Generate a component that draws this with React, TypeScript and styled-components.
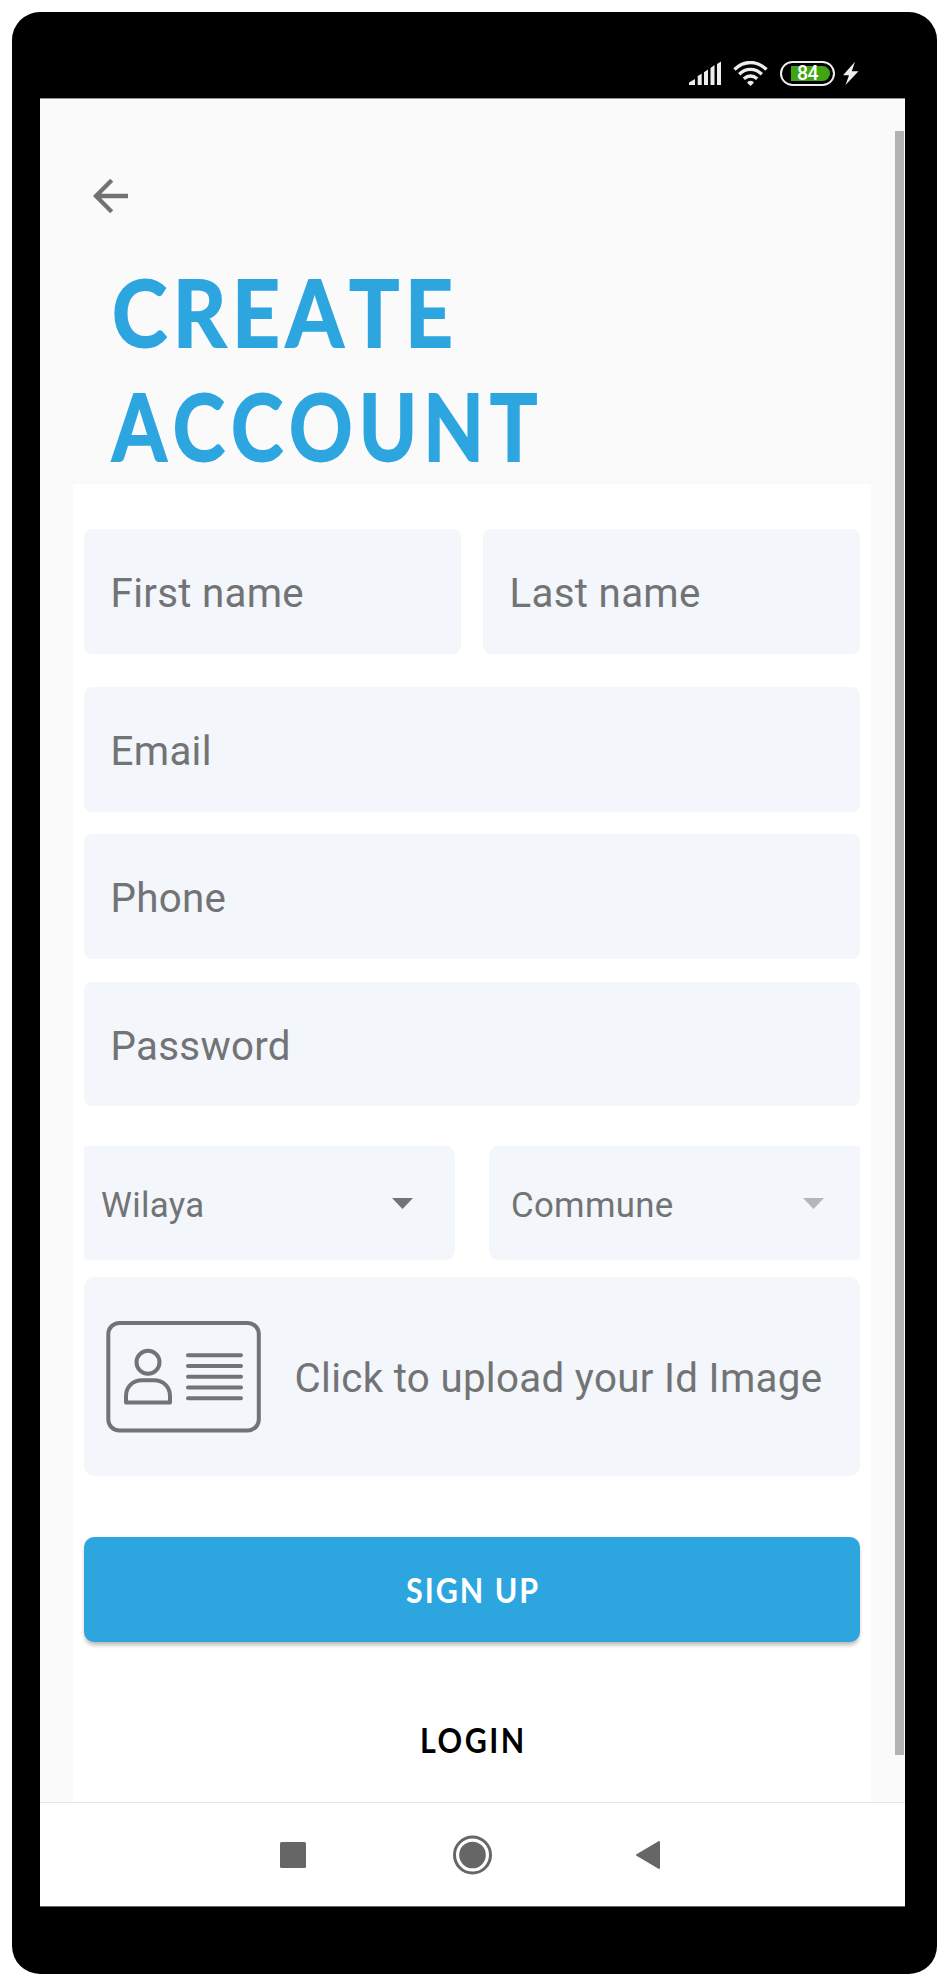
import React from "react";
import styled, { createGlobalStyle } from "styled-components";

const ink = "#727375";
const brand = "#2da6e0";
const fieldFill = "#f3f6fb";

const GlobalStyle = createGlobalStyle`
  * { box-sizing: border-box; }
  body { margin: 0; background: #fff; font-family: Roboto, sans-serif; }
  svg { display: block; flex: none; }
`;

const Phone = styled.div`
  width: 925px;
  height: 1962px;
  margin: 12px 0 0 12px;
  padding: 0 32px 67px 28px;
  background: #000;
  border-radius: 28px;
  display: flex;
  flex-direction: column;
`;

const StatusBar = styled.div`
  height: 86px;
  flex: none;
  display: flex;
  align-items: flex-start;
  padding: 49px 46px 0 649px;
`;

const SignalIcon = styled.svg`
  margin-right: 12px;
`;

const WifiIcon = styled.svg`
  margin-right: 12px;
`;

const Battery = styled.div`
  width: 55px;
  height: 25px;
  border: 2px solid #efefef;
  border-radius: 13px;
  padding: 3px 3px 3px 9px;
  margin-right: 8px;
`;

const Charge = styled.div`
  height: 15px;
  border-radius: 0 8px 8px 0;
  background: #3fa512;
  color: #fff;
  font: 500 19.5px/16px Roboto, sans-serif;
  letter-spacing: -0.5px;
  padding-left: 6px;
`;

const Screen = styled.main`
  flex: 1;
  min-height: 0;
  background: #fafafa;
  border-top: 1px solid #949494;
  border-bottom: 1px solid #666;
  display: flex;
  flex-direction: column;
`;

const Body = styled.div`
  position: relative;
  height: 1703px;
  flex: none;
  padding: 0 34px 0 33px;
`;

const ScrollThumb = styled.div`
  position: absolute;
  top: 32px;
  right: 1px;
  width: 9px;
  height: 1624px;
  background: #b3b3b3;
`;

const BackButton = styled.div`
  height: 156px;
  padding: 79px 0 0 19px;
`;

const Title = styled.h1`
  margin: 0 0 2px 39px;
  height: 227px;
  color: ${brand};
  font: 700 91.5px/113.5px Lato, sans-serif;
  font-kerning: none;
  -webkit-text-stroke: 1.8px ${brand};
`;

const TitleLine = styled.span<{ $stretch: number; $spacing: number }>`
  display: block;
  white-space: nowrap;
  transform: scaleX(${p => p.$stretch});
  transform-origin: left;
  letter-spacing: ${p => p.$spacing}px;
`;

const Form = styled.form`
  height: 1318px;
  background: #fff;
  padding: 45px 11px 0;
`;

const Pair = styled.div<{ $gap: number; $after: number }>`
  display: grid;
  grid-template-columns: 1fr 1fr;
  column-gap: ${p => p.$gap}px;
  margin-bottom: ${p => p.$after}px;
`;

const Field = styled.div<{ $after?: number }>`
  height: 124.5px;
  margin-bottom: ${p => p.$after ?? 0}px;
  padding: 5px 26px 0 26.6px;
  display: flex;
  align-items: center;
  background: ${fieldFill};
  border-radius: 8px;
  color: ${ink};
  font-size: 40.3px;
  letter-spacing: 0.28px;
`;

const Select = styled.div<{ $side: "left" | "right" }>`
  height: 114.5px;
  display: flex;
  align-items: center;
  justify-content: space-between;
  padding: ${p => (p.$side === "left" ? "4px 42px 0 17px" : "4px 36.5px 0 22px")};
  border-radius: ${p => (p.$side === "left" ? "3px 10px 10px 3px" : "10px 3px 3px 10px")};
  background: ${fieldFill};
  color: ${ink};
  font-size: 34.8px;
  letter-spacing: 0.3px;
`;

const CaretIcon = styled.svg`
  margin-bottom: 3px;
`;

const Upload = styled.div`
  height: 199px;
  margin: 17px 0 61px;
  padding-left: 22px;
  display: flex;
  align-items: center;
  gap: 32.5px;
  background: ${fieldFill};
  border-radius: 10px;
  color: ${ink};
`;

const UploadText = styled.span`
  padding-top: 4px;
  font-size: 40.3px;
  letter-spacing: 0.31px;
  white-space: nowrap;
`;

const SignUp = styled.div`
  height: 105px;
  display: flex;
  align-items: center;
  justify-content: center;
  border-radius: 10px;
  background: ${brand};
  color: #fff;
  box-shadow: 0 4px 4px -1px rgba(0, 0, 0, 0.28);
`;

const Login = styled.div`
  height: 105px;
  margin-top: 45px;
  display: flex;
  align-items: center;
  justify-content: center;
  color: #000;
`;

const ButtonText = styled.span<{ $spacing: number }>`
  display: block;
  margin: 0 0 2px 3px;
  font: 700 35px/48px Lato, sans-serif;
  letter-spacing: ${p => p.$spacing}px;
  transform: scaleX(0.87);
`;

const NavBar = styled.nav`
  flex: 1;
  background: #fff;
  border-top: 1px solid #e4e4e4;
  display: flex;
  align-items: flex-start;
  padding: 32px 0 0 240px;
`;

const NavItem = styled.div<{ $after: number }>`
  height: 40px;
  display: flex;
  align-items: center;
  margin-right: ${p => p.$after}px;
`;

const Caret = ({ color }: { color: string }) => (
  <CaretIcon width="21" height="11" viewBox="0 0 21 11">
    <path d="M0 0H21L10.5 11Z" fill={color} />
  </CaretIcon>
);

export default function App() {
  return (
    <>
      <GlobalStyle />
      <Phone>
        <StatusBar>
          <SignalIcon width="32" height="24" viewBox="0 0 32 24" fill="#ededed">
            <path d="M0 24V21.5L6 18V24Z" />
            <path d="M8.7 24V15L12.7 12.7V24Z" />
            <path d="M15 24V11.2L19 8.5V24Z" />
            <path d="M21.5 24V7L25.5 4V24Z" />
            <path d="M28 24V3L32 .5V24Z" />
          </SignalIcon>
          <WifiIcon width="35" height="25" viewBox="0 0 35 25" fill="none" stroke="#ededed" strokeWidth="3.4">
            <path d="M1.5 8.5C11 -.8 24 -.8 33.5 8.5" />
            <path d="M6.2 13.2C13 6.7 22 6.7 28.8 13.2" />
            <path d="M10.8 17.8C15 14.2 20 14.2 24.2 17.8" />
            <path d="M17.5 25L14.3 22C14.3 19 20.7 19 20.7 22Z" fill="#ededed" stroke="none" />
          </WifiIcon>
          <Battery>
            <Charge>84</Charge>
          </Battery>
          <svg width="16" height="24" viewBox="0 0 16 24" fill="#efefef">
            <path d="M12 .8L0 14.2H6L2.5 24L15.5 10.3H8.8Z" />
          </svg>
        </StatusBar>
        <Screen>
          <Body>
            <BackButton>
              <svg width="37" height="37" viewBox="0 0 37 37" fill="none" stroke="#727272" strokeWidth="4.3">
                <path d="M36 18H4M19.7 2.3L4 18L19.7 33.7" />
              </svg>
            </BackButton>
            <Title>
              <TitleLine $stretch={0.91} $spacing={6.3}>CREATE</TitleLine>
              <TitleLine $stretch={0.86} $spacing={7.1}>ACCOUNT</TitleLine>
            </Title>
            <Form>
              <Pair $gap={22} $after={33.5}>
                <Field>First name</Field>
                <Field>Last name</Field>
              </Pair>
              <Field $after={22.5}>Email</Field>
              <Field $after={23}>Phone</Field>
              <Field $after={39.5}>Password</Field>
              <Pair $gap={34} $after={17}>
                <Select $side="left">
                  Wilaya
                  <Caret color={ink} />
                </Select>
                <Select $side="right">
                  Commune
                  <Caret color="#b3b6ba" />
                </Select>
              </Pair>
              <Upload>
                <svg width="156" height="112" viewBox="0 0 156 112" fill="none" stroke={ink} strokeWidth="4">
                  <rect x="2.3" y="2" width="150.5" height="107.5" rx="11" />
                  <circle cx="42" cy="41.3" r="11.5" />
                  <path d="M20 81.5V75C20 65.5 27 59.3 36 59.3H48C57 59.3 64 65.5 64 75V81.5Z" strokeLinejoin="round" />
                  <path d="M82 34.2H135M82 45H135M82 55.8H135M82 66.6H135M82 77.3H135" strokeLinecap="round" />
                </svg>
                <UploadText>Click to upload your Id Image</UploadText>
              </Upload>
              <SignUp>
                <ButtonText $spacing={2.3}>SIGN UP</ButtonText>
              </SignUp>
              <Login>
                <ButtonText $spacing={2.9}>LOGIN</ButtonText>
              </Login>
            </Form>
            <ScrollThumb />
          </Body>
          <NavBar>
            <NavItem $after={147}>
              <svg width="26" height="26" viewBox="0 0 26 26">
                <rect width="26" height="26" rx="1.5" fill="#666" />
              </svg>
            </NavItem>
            <NavItem $after={142}>
              <svg width="40" height="40" viewBox="0 0 40 40">
                <circle cx="19.5" cy="20" r="18" fill="none" stroke="#666" strokeWidth="3" />
                <circle cx="19.5" cy="20" r="13.3" fill="#666" />
              </svg>
            </NavItem>
            <NavItem $after={0}>
              <svg width="26" height="30" viewBox="0 0 26 30">
                <path d="M24 2V28L2 15Z" fill="#666" stroke="#666" strokeWidth="2" strokeLinejoin="round" />
              </svg>
            </NavItem>
          </NavBar>
        </Screen>
      </Phone>
    </>
  );
}
